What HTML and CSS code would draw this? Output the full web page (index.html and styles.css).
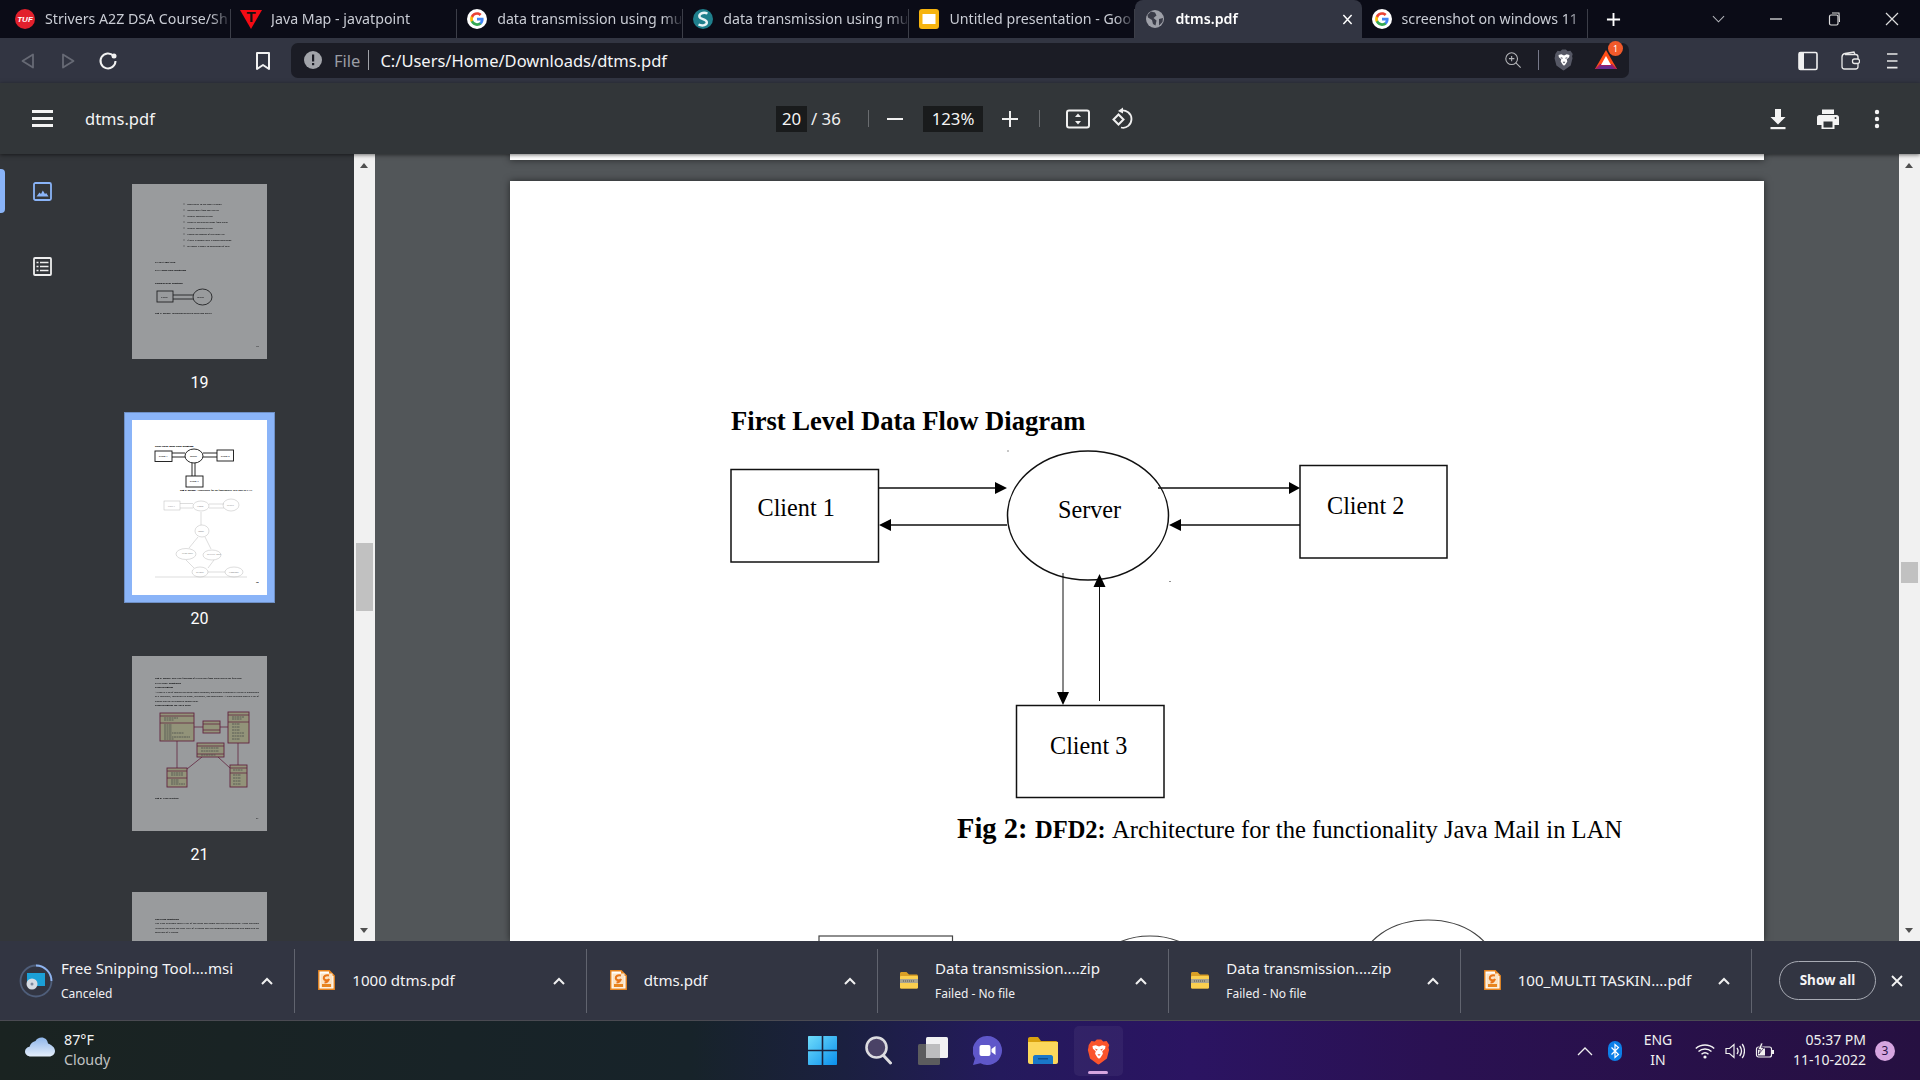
FILE: index.html
```html
<!DOCTYPE html>
<html lang="en">
<head>
<meta charset="utf-8">
<title>dtms.pdf</title>
<link rel="stylesheet" href="styles.css">
</head>
<body>
<svg class="defs" width="0" height="0">
  <defs>
    <symbol id="google" viewBox="0 0 24 24">
      <circle cx="12" cy="12" r="12" fill="#fff"/>
      <g transform="translate(3 3) scale(.75)">
        <path fill="#4285F4" d="M22.56 12.25c0-.78-.07-1.53-.2-2.25H12v4.26h5.92c-.26 1.37-1.04 2.53-2.21 3.31v2.77h3.57c2.08-1.92 3.28-4.74 3.28-8.09z"/>
        <path fill="#34A853" d="M12 23c2.97 0 5.46-.98 7.28-2.66l-3.57-2.77c-.98.66-2.23 1.06-3.71 1.06-2.86 0-5.29-1.93-6.16-4.53H2.18v2.84C3.99 20.53 7.7 23 12 23z"/>
        <path fill="#FBBC05" d="M5.84 14.09c-.22-.66-.35-1.36-.35-2.09s.13-1.43.35-2.09V7.07H2.18C1.43 8.55 1 10.22 1 12s.43 3.45 1.18 4.93l2.85-2.22.81-.62z"/>
        <path fill="#EA4335" d="M12 5.38c1.62 0 3.06.56 4.21 1.64l3.15-3.15C17.45 2.09 14.97 1 12 1 7.7 1 3.99 3.47 2.18 7.07l3.66 2.84c.87-2.6 3.3-4.53 6.16-4.53z"/>
      </g>
    </symbol>
    <symbol id="lion" viewBox="0 0 24 26">
      <path fill="currentColor" d="M2.5 6.5 5 2.8 8 3.4 10 1.5h4l2 1.9 3-.6 2.5 3.7-.7 2.4.5 2.2-2 8-6.8 4.9-1 .5-1-.5-6.8-4.9-2-8 .5-2.2z"/>
      <path fill="#fff" d="M6 7.5 9 6.8 12 8l3-1.2 3 .7-.4 2.5-2.6 2.3.6 2.4L13.5 18 12 19.2 10.500 18l-2.100-3.300.6-2.400-2.600-2.300z"/>
      <path fill="currentColor" d="M8 9.800l2.800.9-1 1.200zM16 9.800l-2.800.9 1 1.200zM10.500 15h3L12 16.800z"/>
    </symbol>
    <symbol id="pdffile" viewBox="0 0 17 20">
      <path fill="#fff" stroke="#e8851f" stroke-width="1.4" d="M.8.8h10.4l5 5v13.400H.8z"/>
      <path fill="#e8851f" d="M11 .8l5.200 5H11z"/>
      <rect x="2.5" y="3.5" width="12" height="14" fill="#fbe3c4"/>
      <path fill="none" stroke="#e8751a" stroke-width="2" d="M11 5.500C7.500 4.500 5.500 6.500 5.800 8.500c.3 2 3.700 2.500 5.200.5-1 3-3 3.500-4.500 3.500"/>
      <rect x="4" y="14" width="9" height="3" fill="#e8851f"/>
    </symbol>
    <symbol id="zip" viewBox="0 0 18 18">
      <path fill="#d99f25" d="M0 2.500C0 1.700.6 1 1.500 1h5L9 3.500h7.500c.8 0 1.500.7 1.500 1.500v11c0 .8-.7 1.500-1.500 1.500h-15C.7 17.500 0 16.800 0 16z"/>
      <rect y="5" width="18" height="12.5" rx="1" fill="#fbcf4f"/>
      <rect x="0" y="8" width="18" height="4" fill="#a9a48f"/>
      <path stroke="#555" stroke-width="1" stroke-dasharray="1 1" d="M3 10h12"/>
    </symbol>
  </defs>
</svg>

<header class="tabbar">
  <div class="tab">
    <svg class="fav" viewBox="0 0 20 20"><circle cx="10" cy="10" r="10" fill="#e2202c"/><text class="tuf" x="10" y="12.8" text-anchor="middle">TUF</text></svg>
    <span class="tab-title">Strivers A2Z DSA Course/Sh</span>
  </div>
  <div class="tab">
    <svg class="fav" viewBox="0 0 20 20"><path fill="#f40b14" d="M-1 1h22L10 20z"/><text class="javat" x="10" y="13" text-anchor="middle">T</text></svg>
    <span class="tab-title">Java Map - javatpoint</span>
  </div>
  <div class="tab">
    <svg class="fav"><use href="#google"/></svg>
    <span class="tab-title">data transmission using mu</span>
  </div>
  <div class="tab">
    <svg class="fav" viewBox="0 0 20 20"><circle cx="10" cy="10" r="10" fill="#1f7f8c"/><path fill="none" stroke="#e8f4f6" stroke-width="2.4" d="M14.500 4.500C10 2.500 5.500 5 6.500 8c.8 2.400 6.800 2 7.300 5 .5 3-4.300 4.500-8.300 2.500"/></svg>
    <span class="tab-title">data transmission using mu</span>
  </div>
  <div class="tab">
    <svg class="fav" viewBox="0 0 20 20"><rect width="20" height="20" x="0" y="0" rx="3" fill="#f6b40e"/><rect x="3.5" y="5" width="13" height="10" fill="#fff"/></svg>
    <span class="tab-title">Untitled presentation - Goo</span>
  </div>
  <div class="tab tab-active">
    <svg class="fav" viewBox="0 0 20 20"><circle cx="10" cy="10" r="9" fill="#9ea0a8"/><path fill="#3a3c48" d="M6 2.500l4 1 1.500 3-3 2.500 3 2.500-1 5-2.500-1.500L7 11 3 8.500 2.500 6zM14 10l4-1-.5 4-3.500 3.500z"/></svg>
    <span class="tab-title">dtms.pdf</span>
    <svg class="tab-x" viewBox="0 0 12 12"><path stroke="#fff" stroke-width="1.6" d="M1.500 1l9 10M10.500 1l-9 10"/></svg>
  </div>
  <div class="tab">
    <svg class="fav"><use href="#google"/></svg>
    <span class="tab-title">screenshot on windows 11</span>
  </div>
  <svg class="newtab" viewBox="0 0 16 16"><path stroke="#fff" stroke-width="2" d="M8 1v14M1 8h14"/></svg>
  <svg class="tabbar-caret" viewBox="0 0 14 8"><path fill="none" stroke="#b4b6bc" stroke-width="1.1" d="M1 1l6 6 6-6"/></svg>
  <svg class="win-btn" viewBox="0 0 14 14"><path stroke="#ddd" stroke-width="1.3" d="M1 7h12"/></svg>
  <svg class="win-btn" viewBox="0 0 14 14"><rect x="2.5" y="3" width="8.5" height="10" rx="1.5" fill="none" stroke="#ddd" stroke-width="1.2"/><path fill="none" stroke="#ddd" stroke-width="1.1" d="M5 1h7l.5 9"/></svg>
  <svg class="win-btn" viewBox="0 0 14 14"><path stroke="#ddd" stroke-width="1.2" d="M1 1l12 12M13 1L1 13"/></svg>
</header>

<nav class="toolbar">
  <svg class="nav-btn" viewBox="0 0 24 24"><path fill="none" stroke="#676a75" stroke-width="1.8" stroke-linejoin="round" d="M6.500 12L17 5.500v13z"/></svg>
  <svg class="nav-btn" viewBox="0 0 24 24"><path fill="none" stroke="#676a75" stroke-width="1.8" stroke-linejoin="round" d="M17.500 12L7 5.500v13z"/></svg>
  <svg class="nav-btn" viewBox="0 0 24 24"><path fill="none" stroke="#f2f2f2" stroke-width="2" d="M17.500 6.800A7.500 7.500 0 1 0 19.500 12"/><circle cx="18" cy="7" r="2.5" fill="#f2f2f2"/></svg>
  <svg class="nav-btn bookmark" viewBox="0 0 24 24"><path fill="none" stroke="#f2f2f2" stroke-width="2" stroke-linejoin="round" d="M6 4h12v16l-6-4-6 4z"/></svg>
  <div class="address">
    <svg class="info" viewBox="0 0 20 20"><circle cx="10" cy="10" r="9" fill="#a2a4aa"/><rect x="9" y="4.5" width="2.2" height="7" fill="#1a1b24"/><rect x="9" y="13" width="2.2" height="2.2" fill="#1a1b24"/></svg>
    <span class="scheme">File</span>
    <span class="addr-sep"></span>
    <span class="url">C:/Users/Home/Downloads/dtms.pdf</span>
    <svg class="addr-zoom" viewBox="0 0 20 20"><circle cx="8.5" cy="8.5" r="6.5" fill="none" stroke="#b5b6ba" stroke-width="1.2"/><path stroke="#b5b6ba" stroke-width="1.2" d="M13 13l5.500 5.500M5.500 8.500h6M8.500 5.500v6"/></svg>
    <span class="addr-sep2"></span>
    <svg class="addr-lion"><use href="#lion"/></svg>
    <div class="bat">
      <svg class="bat-icon" viewBox="0 0 22 19"><path fill="#ff4d17" d="M11 0L0 19h22z"/><path fill="#a01f65" d="M0 19l5-5h12l5 5z"/><path fill="#662d91" d="M3 19l3-3h10l3 3z"/><path fill="#fff" d="M11 6l-5 9h10z"/></svg>
      <span class="bat-badge">1</span>
    </div>
  </div>
  <svg class="tool-btn tool-first" viewBox="0 0 20 20"><rect x="1" y="1.5" width="18" height="17" rx="1.5" fill="none" stroke="#f0f0f0" stroke-width="1.6"/><rect x="1" y="1.5" width="5" height="17" fill="#f0f0f0"/></svg>
  <svg class="tool-btn" viewBox="0 0 20 20"><path fill="none" stroke="#e8e8e8" stroke-width="1.3" d="M2 6c0-2 1-3 3-3.500L14 1l1 2.500M2 6v9.500c0 1.500 1 2.500 2.500 2.500h11c1.500 0 2.500-1 2.500-2.500V6c0-1.500-1-2.500-2.500-2.500H5"/><rect x="12.5" y="8" width="7" height="4.5" rx="2" fill="#323542" stroke="#e8e8e8" stroke-width="1.3"/></svg>
  <svg class="tool-btn" viewBox="0 0 20 20"><path stroke="#e8e8e8" stroke-width="1.7" d="M5 3h10.500M5 10h10.500M5 16.700h10.500"/></svg>
</nav>

<section class="pdfbar">
  <div class="pdf-left">
    <svg class="pdf-menu" viewBox="0 0 21 17"><path stroke="#f4f4f4" stroke-width="3" d="M0 1.500h21M0 8.500h21M0 15.500h21"/></svg>
    <span class="pdf-title">dtms.pdf</span>
  </div>
  <span class="pdf-input page-input">20</span>
  <span class="page-total">/ 36</span>
  <span class="pdf-sep sep-a"></span>
  <svg class="pm minus" viewBox="0 0 20 20"><path stroke="#f0f0f0" stroke-width="2" d="M2 10h16"/></svg>
  <span class="pdf-input zoom-input">123%</span>
  <svg class="pm plus" viewBox="0 0 20 20"><path stroke="#f0f0f0" stroke-width="2" d="M2 10h16M10 2v16"/></svg>
  <span class="pdf-sep sep-b"></span>
  <svg class="pdf-btn fit" viewBox="0 0 24 24"><rect x="1" y="3.5" width="22" height="17" rx="2" fill="none" stroke="#f0f0f0" stroke-width="2"/><path fill="#f0f0f0" d="M12 6.500l3 3.500H9zM12 17.500L9 14h6z"/></svg>
  <svg class="pdf-btn rotate" viewBox="0 0 24 24"><path fill="none" stroke="#f0f0f0" stroke-width="2" d="M8 12.500l5-5 5 5-5 5z" transform="translate(-4.5 0)"/><path fill="none" stroke="#f0f0f0" stroke-width="1.8" d="M11 3.500c5-1 10.500 3 10.500 8.500s-5 10-10.500 8.500"/><path fill="#f0f0f0" d="M8 4l5-3.500v6z"/></svg>
  <svg class="pdf-btn download" viewBox="0 0 24 24"><path fill="#f4f4f4" d="M9 2h6v8h4.500L12 17.500 4.500 10H9z"/><rect x="4.5" y="20" width="15" height="2.2" fill="#f4f4f4"/></svg>
  <svg class="pdf-btn print" viewBox="0 0 24 24"><path fill="#f4f4f4" d="M6 2.500h12v4.500H6zM3.500 8h17C22 8 23 9 23 10.500V18h-4.500v4h-13v-4H1v-7.500C1 9 2 8 3.500 8z"/><rect x="7.5" y="14.5" width="9" height="6" fill="#323639"/><circle cx="19.5" cy="11" r="1" fill="#323639"/></svg>
  <svg class="pdf-btn dots" viewBox="0 0 24 24"><circle cx="12" cy="5" r="2.2" fill="#f4f4f4"/><circle cx="12" cy="12" r="2.2" fill="#f4f4f4"/><circle cx="12" cy="19" r="2.2" fill="#f4f4f4"/></svg>
</section>

<main class="main">
  <aside class="sidebar">
    <div class="rail">
      <span class="rail-mark"></span>
      <svg class="rail-icon" viewBox="0 0 19 19"><rect x="1" y="1" width="17" height="17" rx="1.5" fill="none" stroke="#8ab4f8" stroke-width="1.8"/><path fill="#8ab4f8" d="M3.500 14.500l3-4 1.500 1.500 1.800-3.500 2.200 3.500 1.200-1 2.300 3.500z"/></svg>
      <svg class="rail-icon rail-list" viewBox="0 0 19 19"><rect x="1" y="1" width="17" height="17" rx="1" fill="none" stroke="#eee" stroke-width="1.8"/><path stroke="#eee" stroke-width="1.7" d="M7 5.500h8.500M7 9.500h8.500M7 13.500h8.500M3.500 5.500H5.500M3.500 9.500H5.500M3.500 13.500H5.500"/></svg>
    </div>
    <div class="thumbs">
      <figure class="thumb-item">
        <svg class="thumb dim" viewBox="0 0 135 175">
          <path class="bullets" d="M51.500 20h1M51.500 26h1M51.500 32h1M51.500 38h1M51.500 44h1M51.500 50h1M51.500 56h1M51.500 62h1"/>
          <g class="tt">
            <text x="55" y="21">Open email to see email window</text>
            <text x="55" y="27">Delete email from mail server</text>
            <text x="55" y="33">Display message to user</text>
            <text x="55" y="39">Retrieve the mailing inbox from client</text>
            <text x="55" y="45">Display message to user</text>
            <text x="55" y="51">Update the content of the inbox list</text>
            <text x="55" y="57">If mail is normal mail without description</text>
            <text x="55" y="63">Set inbox window to description of mail</text>
          </g>
          <g class="tb">
            <text x="23" y="79">3.7 DIAGRAMS</text>
            <text x="23" y="87">3.7.1 Data flow Diagrams</text>
            <text x="23" y="100">Context level Diagram</text>
            <text x="23" y="130">Fig 1: DFD1: <tspan class="tn">Interaction between client and Server</tspan></text>
          </g>
          <g class="ts">
            <rect x="25" y="107" width="16" height="11"/>
            <ellipse cx="70.5" cy="113" rx="9.5" ry="8"/>
            <path d="M41 111h20M41 115h20"/>
          </g>
          <g class="tt">
            <text x="29" y="113.5">Client</text>
            <text x="65" y="114">Server</text>
            <text x="124" y="163">19</text>
          </g>
        </svg>
        <figcaption class="thumb-num">19</figcaption>
      </figure>
      <figure class="thumb-item">
        <svg class="thumb selected" viewBox="0 0 135 175">
          <g class="tb"><text x="23" y="27">First Level Data Flow Diagram</text></g>
          <g class="ts">
            <rect x="23" y="31" width="17" height="10.5"/>
            <rect x="85" y="30" width="16.5" height="11"/>
            <rect x="54" y="56" width="17" height="11"/>
            <ellipse cx="62" cy="36" rx="9" ry="7"/>
            <path d="M40 33h13M40 37h13M71 33h14M71 37h14M60 43v13M63 43v13"/>
          </g>
          <g class="tt">
            <text x="27" y="37">Client 1</text>
            <text x="58" y="37">Server</text>
            <text x="89" y="37">Client 2</text>
            <text x="58" y="62">Client 3</text>
          </g>
          <g class="tb"><text x="48" y="71">Fig 2: DFD2: <tspan class="tn">Architecture for the functionality Java Mail in LAN</tspan></text></g>
          <g class="tl">
            <rect x="32" y="81" width="16" height="9"/>
            <ellipse cx="69" cy="86" rx="8" ry="5"/>
            <ellipse cx="99" cy="85" rx="8" ry="6"/>
            <ellipse cx="70" cy="111" rx="7" ry="6"/>
            <ellipse cx="54" cy="134" rx="10" ry="5.5"/>
            <ellipse cx="80" cy="135" rx="9" ry="5"/>
            <ellipse cx="68" cy="152" rx="8" ry="5"/>
            <ellipse cx="102" cy="152" rx="9" ry="5"/>
            <path d="M48 83.500h13M48 88h13M77 84h15M77 88h15M69 92v13M66 117l-9 11M73 117l6 12M54 140l8 8M82 140l-6 8M76 152h17"/>
            <path d="M23 157h92"/>
          </g>
          <g class="tt tt-light">
            <text x="36" y="87">User 1</text>
            <text x="65" y="87">Login</text>
            <text x="95" y="86">Server</text>
            <text x="66" y="112">Inbox</text>
            <text x="50" y="134">Send Mail</text>
            <text x="75" y="135">Receive Mail</text>
            <text x="64" y="153">Reload</text>
            <text x="97" y="153">Compose</text>
          </g>
          <g class="tt"><text x="124" y="163">20</text></g>
        </svg>
        <figcaption class="thumb-num">20</figcaption>
      </figure>
      <figure class="thumb-item">
        <svg class="thumb dim" viewBox="0 0 135 175">
          <g class="tb">
            <text x="23" y="23" textLength="87">Fig 3: DFD3: <tspan class="tn">Step wise functions of a Java Mail from initial step to the final step.</tspan></text>
            <text x="23" y="28">3.7.2 UML Diagrams</text>
            <text x="23" y="32">Class Diagram</text>
            <text x="23" y="50">Class Diagram for Java Mail</text>
            <text x="23" y="143">Fig 4: <tspan class="tn">Class Diagram</tspan></text>
          </g>
          <g class="tt">
            <text x="23" y="37" textLength="104">A class is a set of objects that share same attributes, operations. Graphically a class is represented</text>
            <text x="23" y="41" textLength="104">as a rectangle, including its name, attributes, and operations. A class diagram shows a set of</text>
            <text x="23" y="46">classes and the relationship among them.</text>
            <text x="124" y="163">21</text>
          </g>
          <g class="uml-line">
            <path d="M62 71h9M88 71h8M45 85v27M106 87v22M70 101L55 113M86 101l12 11"/>
          </g>
          <g class="uml">
            <rect x="28" y="57" width="34" height="28"/><path d="M28 60h34M28 67h34"/>
            <rect x="71" y="65" width="17" height="12"/><path d="M71 68h17M71 74h17"/>
            <rect x="96" y="56" width="21" height="31"/><path d="M96 59h21M96 66h21"/>
            <rect x="65" y="87" width="27" height="14"/><path d="M65 90h27M65 98h27"/>
            <rect x="35" y="112" width="20" height="19"/><path d="M35 115h20M35 122h20"/>
            <rect x="98" y="109" width="17" height="22"/><path d="M98 112h17M98 117h17"/>
          </g>
          <path class="uml-meth" d="M32 62h14M32 64h10M32 69h8M32 71h8M32 73h8M32 75h8M32 77h20M32 79h8M32 81h26M32 83h10M100 61h12M100 63h10M100 68h8M100 71h8M100 74h8M100 77h12M100 80h12M100 83h8M69 92h18M69 95h18M69 99h15M39 117h12M39 119h12M39 124h8M39 126h8M39 128h14M101 114h10M101 119h8M101 122h8M101 125h8M101 128h8"/>
        </svg>
        <figcaption class="thumb-num">21</figcaption>
      </figure>
      <figure class="thumb-item">
        <svg class="thumb dim" viewBox="0 0 135 175">
          <g class="tb"><text x="23" y="28">Use Case Diagrams</text></g>
          <g class="tt">
            <text x="23" y="32" textLength="104">Use Case diagrams shows a set of use cases and actors and their relationships. These diagrams</text>
            <text x="23" y="37" textLength="104">illustrate the static use case view of a system and are important in organizing and modeling the</text>
            <text x="23" y="41">behaviors of a system.</text>
          </g>
        </svg>
      </figure>
    </div>
  </aside>
  <div class="scrollbar">
    <span class="sb-up"></span>
    <span class="sb-thumb sb-thumb-left"></span>
    <span class="sb-down"></span>
  </div>
  <div class="viewer">
    <div class="prev-page"></div>
    <div class="page">
      <svg class="diagram" viewBox="0 0 1254 760">
        <text class="dhead" x="221" y="249">First Level Data Flow Diagram</text>
        <g class="dshape">
          <rect x="221" y="288.5" width="147.5" height="92.5"/>
          <rect x="790" y="284.5" width="147" height="92.5"/>
          <rect x="506.5" y="524.5" width="147.5" height="92"/>
          <ellipse cx="578" cy="334.5" rx="80.5" ry="64.5"/>
        </g>
        <g class="dline">
          <path d="M368.500 307h120M497 344H379M648 307h134M790 344H670"/>
          <path class="dthin" d="M553 392v121M589.500 520V406"/>
        </g>
        <g class="dhd">
          <path d="M497 307l-12-6v12zM369 344l12-6v12zM790 307l-11-6v12zM659 344l12-6v12zM553 524l-6-13h12zM589.500 393l-6 13h12z"/>
        </g>
        <path class="ddot" d="M497.500 270h1M659.500 400.500h1"/>
        <g class="dlabel">
          <text x="247.5" y="335">Client 1</text>
          <text x="548" y="336.5">Server</text>
          <text x="817" y="333">Client 2</text>
          <text x="540" y="572.5">Client 3</text>
          <text x="447" y="656.5"><tspan class="dcap-b" x="447">Fig 2:</tspan><tspan class="dcap-s" x="525">DFD2:</tspan><tspan class="dcap" x="602">Architecture for the functionality Java Mail in LAN</tspan></text>
        </g>
        <g class="dlow">
          <rect x="309" y="755" width="133.5" height="40"/>
          <ellipse cx="640" cy="785" rx="50" ry="30"/>
          <ellipse cx="918" cy="785" rx="66" ry="46"/>
        </g>
      </svg>
    </div>
  </div>
  <div class="scrollbar">
    <span class="sb-up"></span>
    <span class="sb-thumb sb-thumb-right"></span>
    <span class="sb-down"></span>
  </div>
</main>

<section class="downloads">
  <div class="dl">
    <svg class="dl-icon" viewBox="0 0 34 34"><circle cx="17" cy="17" r="15.5" fill="none" stroke="#4f5e7a" stroke-width="1.8"/><path fill="none" stroke="#8fb4f0" stroke-width="1.8" d="M17 1.500A15.500 15.500 0 0 1 32.500 17"/><rect x="8" y="9" width="18" height="13" fill="#1ba0d8"/><circle cx="13" cy="20" r="5.5" fill="#d5dbe4"/><circle cx="13" cy="20" r="1.5" fill="#7d8aa0"/></svg>
    <div class="dl-text"><span class="dl-name">Free Snipping Tool....msi</span><span class="dl-sub">Canceled</span></div>
    <svg class="dl-caret" viewBox="0 0 12 8"><path fill="none" stroke="#f0f0f0" stroke-width="2" d="M1 7l5-5 5 5"/></svg>
  </div>
  <div class="dl">
    <svg class="dl-icon"><use href="#pdffile" x="8" y="6" width="17" height="20"/></svg>
    <div class="dl-text"><span class="dl-name">1000 dtms.pdf</span></div>
    <svg class="dl-caret" viewBox="0 0 12 8"><path fill="none" stroke="#f0f0f0" stroke-width="2" d="M1 7l5-5 5 5"/></svg>
  </div>
  <div class="dl">
    <svg class="dl-icon"><use href="#pdffile" x="8" y="6" width="17" height="20"/></svg>
    <div class="dl-text"><span class="dl-name">dtms.pdf</span></div>
    <svg class="dl-caret" viewBox="0 0 12 8"><path fill="none" stroke="#f0f0f0" stroke-width="2" d="M1 7l5-5 5 5"/></svg>
  </div>
  <div class="dl">
    <svg class="dl-icon"><use href="#zip" x="7" y="7" width="18" height="18"/></svg>
    <div class="dl-text"><span class="dl-name">Data transmission....zip</span><span class="dl-sub">Failed - No file</span></div>
    <svg class="dl-caret" viewBox="0 0 12 8"><path fill="none" stroke="#f0f0f0" stroke-width="2" d="M1 7l5-5 5 5"/></svg>
  </div>
  <div class="dl">
    <svg class="dl-icon"><use href="#zip" x="7" y="7" width="18" height="18"/></svg>
    <div class="dl-text"><span class="dl-name">Data transmission....zip</span><span class="dl-sub">Failed - No file</span></div>
    <svg class="dl-caret" viewBox="0 0 12 8"><path fill="none" stroke="#f0f0f0" stroke-width="2" d="M1 7l5-5 5 5"/></svg>
  </div>
  <div class="dl">
    <svg class="dl-icon"><use href="#pdffile" x="8" y="6" width="17" height="20"/></svg>
    <div class="dl-text"><span class="dl-name">100_MULTI TASKIN....pdf</span></div>
    <svg class="dl-caret" viewBox="0 0 12 8"><path fill="none" stroke="#f0f0f0" stroke-width="2" d="M1 7l5-5 5 5"/></svg>
  </div>
  <span class="show-all">Show all</span>
  <svg class="dl-close" viewBox="0 0 12 12"><path stroke="#f4f4f4" stroke-width="1.8" d="M1 1l10 10M11 1L1 11"/></svg>
</section>

<footer class="taskbar">
  <div class="weather">
    <svg class="cloud" viewBox="0 0 30 20">
      <defs><linearGradient id="cloudg" x1="0" y1="0" x2="0" y2="1"><stop offset="0" stop-color="#8fb6ea"/><stop offset="1" stop-color="#e4eefb"/></linearGradient></defs>
      <path fill="url(#cloudg)" d="M6 19.500C2.500 19.500 0 17.300 0 14.500 0 12 1.800 10.200 4.500 9.700 5.500 6.500 8 4.500 10.500 4c1-2.200 3.500-3.500 6-3.500 3.500 0 6 2.300 6.500 6 3.500 1.500 7 3.700 7 7.500 0 3-2.500 5.500-6 5.500z"/>
    </svg>
    <div class="weather-text"><span class="temp">87°F</span><span class="cond">Cloudy</span></div>
  </div>
  <div class="apps">
    <svg class="app win" viewBox="0 0 29 29">
      <defs><linearGradient id="wing" x1="0" y1="0" x2="1" y2="1"><stop offset="0" stop-color="#6fdcfb"/><stop offset="1" stop-color="#0a8fec"/></linearGradient></defs>
      <path fill="url(#wing)" d="M1 0h12.700v13.700H0V1C0 .4.400 0 1 0zM15.300 0H28c.6 0 1 .4 1 1v12.700H15.300zM0 15.300h13.700V29H1c-.6 0-1-.4-1-1zM15.300 15.300H29V28c0 .6-.4 1-1 1H15.300z"/>
    </svg>
    <svg class="app search" viewBox="0 0 27 29"><circle cx="11.5" cy="11.5" r="10" fill="#4a4266" stroke="#dcdce0" stroke-width="2.6"/><path stroke="#dcdce0" stroke-width="3" stroke-linecap="round" d="M18.500 19.500l7 7.500"/></svg>
    <svg class="app tview" viewBox="0 0 30 28"><rect y="7" width="22" height="21" rx="1.5" fill="#5c5c5e"/><rect x="8" width="22" height="21" rx="1.5" fill="#f1f1f3"/><rect x="8" y="7" width="14" height="14" fill="#bdbdbf"/></svg>
    <svg class="app chat" viewBox="0 0 29 29"><path fill="#5f57c9" d="M14.500 0a14.500 14.500 0 1 1-7 27.200L0 29l2-6.700A14.500 14.500 0 0 1 14.500 0z"/><rect x="6.5" y="9" width="11" height="11" rx="2" fill="#fff"/><path fill="#fff" d="M18.500 13l4-3v9l-4-3z"/></svg>
    <svg class="app folder" viewBox="0 0 30 27"><path fill="#d9a20f" d="M0 2C0 .9.900 0 2 0h8l3 4h15c1 0 2 1 2 2v6H0z"/><path fill="#fcd85c" d="M0 5h30v20c0 1-1 2-2 2H2c-1 0-2-1-2-2z"/><path fill="#1a78c8" d="M5 20c0-1 1-2 2-2h16c1 0 2 1 2 2v7H5z"/><rect x="10" y="21" width="10" height="1.5" fill="#0d4f90"/></svg>
    <div class="brave-slot">
      <svg class="brave-lion"><use href="#lion"/></svg>
      <span class="brave-line"></span>
    </div>
  </div>
  <div class="tray">
    <svg class="tray-caret" viewBox="0 0 16 10"><path fill="none" stroke="#f0f0f0" stroke-width="1.3" d="M1 9l7-7 7 7"/></svg>
    <svg class="bt" viewBox="0 0 14 20"><rect width="14" height="20" rx="7" fill="#0d7fe8"/><path fill="none" stroke="#fff" stroke-width="1.2" d="M3.500 6.500l7 7L7 16.500v-13l3.500 3-7 7"/></svg>
    <div class="lang"><span>ENG</span><span>IN</span></div>
    <svg class="wifi" viewBox="0 0 20 16"><g fill="none" stroke="#f4f4f4" stroke-width="1.5"><path d="M.8 5.500C6 .8 14 .8 19.200 5.500"/><path d="M3.500 8.500c3.600-3.200 9.400-3.200 13 0"/><path d="M6.500 11.300c2-1.700 5-1.700 7 0"/></g><circle cx="10" cy="14" r="1.6" fill="#f4f4f4"/></svg>
    <svg class="vol" viewBox="0 0 20 16"><path fill="none" stroke="#f0f0f0" stroke-width="1.2" d="M1 5.500h3.500L9 1.500v13l-4.500-4H1z"/><path fill="none" stroke="#f0f0f0" stroke-width="1.3" d="M12 5c1.300 1.800 1.300 4.200 0 6M14.700 3c2.200 3 2.200 7 0 10M17.200 1c3 4 3 10 0 14"/></svg>
    <svg class="batt" viewBox="0 0 20 16"><rect x="1.5" y="4" width="15" height="10" rx="2" fill="none" stroke="#f0f0f0" stroke-width="1.2"/><path fill="#f0f0f0" d="M3 5.500h7v7H3zM17 7h2v4h-2z"/><path fill="#f0f0f0" stroke="#2a1245" stroke-width=".7" d="M6 0L3 6.500h2.500L4 11l5-6.500H6.500L8 0z"/></svg>
    <div class="clock"><span>05:37 PM</span><span>11-10-2022</span></div>
    <span class="notif">3</span>
  </div>
</footer>
</body>
</html>
```

FILE: styles.css
```css
* { box-sizing: border-box; }
html, body { margin: 0; padding: 0; }
body {
  width: 1920px;
  height: 1080px;
  overflow: hidden;
  display: flex;
  flex-direction: column;
  background: #323639;
  font-family: "Noto Sans", "Open Sans", sans-serif;
  color: #fff;
}
svg { display: block; flex: none; }
.defs { position: absolute; }

/* tab strip */
.tabbar {
  flex: 0 0 38px;
  display: flex;
  align-items: center;
  padding-left: 5px;
  background: #0b0c17;
}
.tab {
  flex: 0 0 226.1px;
  min-width: 0;
  height: 38px;
  display: flex;
  align-items: center;
  padding-left: 10px;
  padding-right: 2px;
  position: relative;
}
.tab::after {
  content: "";
  position: absolute;
  right: 0;
  top: 9px;
  bottom: 0;
  width: 1px;
  background: #3c3e48;
}
.tab-active {
  background: #323542;
  border-radius: 8px 8px 0 0;
  padding-right: 9px;
}
.tab-active::after { display: none; }
.fav { width: 20px; height: 20px; margin-right: 10px; overflow: visible; }
.tab-title {
  flex: 1;
  min-width: 0;
  padding-bottom: 2px;
  white-space: nowrap;
  font-size: 14.2px;
  color: #c9ccd4;
  -webkit-mask-image: linear-gradient(90deg, #000 90%, rgba(0, 0, 0, .15));
  mask-image: linear-gradient(90deg, #000 90%, rgba(0, 0, 0, .15));
}
.tab-active .tab-title { color: #fff; font-weight: 600; }
.tab-x { width: 11px; height: 11px; }
.tuf { font: italic 800 8px "Liberation Sans", sans-serif; fill: #fff; }
.javat { font: 700 15px "Liberation Sans", sans-serif; fill: #111; }
.newtab { width: 15px; height: 15px; margin-left: 18.8px; }
.tabbar-caret { width: 13px; height: 8px; margin-left: 91px; }
.win-btn { width: 14px; height: 14px; margin-left: 44px; }

/* address toolbar */
.toolbar {
  flex: 0 0 45px;
  display: flex;
  align-items: center;
  padding-left: 8px;
  background: #323542;
}
.nav-btn { width: 40px; height: 24px; }
.bookmark { margin-left: 115px; }
.address {
  flex: 0 0 1338px;
  margin-left: 8px;
  height: 35px;
  margin-top: -1px;
  display: flex;
  align-items: center;
  padding-left: 12px;
  padding-right: 9px;
  border-radius: 7px;
  background: #1b1c25;
}
.info { width: 20px; height: 20px; }
.scheme { margin-left: 11px; font-size: 16.5px; color: #9a9ca4; }
.addr-sep { width: 1px; height: 20px; margin-left: 8px; background: #a0a2a8; }
.url { margin-left: 11px; font-size: 16.5px; color: #f4f4f6; white-space: nowrap; }
.addr-zoom { width: 18px; height: 18px; margin-left: auto; }
.addr-sep2 { width: 1px; height: 20px; margin-left: 16px; background: #77798a; }
.addr-lion { width: 22px; height: 24px; margin-left: 14px; color: #565865; }
.bat { position: relative; width: 28px; height: 20px; margin-left: 17px; }
.bat-icon { width: 22px; height: 19px; margin-left: 3px; }
.bat-badge {
  position: absolute;
  left: 16px;
  top: -9px;
  width: 15px;
  height: 15px;
  border-radius: 50%;
  background: #f1592a;
  color: #fff;
  font-size: 9px;
  line-height: 15px;
  text-align: center;
}
.tool-btn { width: 20px; height: 20px; margin-left: 22px; }
.tool-first { margin-left: 169px; }

/* pdf toolbar */
.pdfbar {
  flex: 0 0 71px;
  display: flex;
  align-items: center;
  background: #323639;
  position: relative;
  z-index: 3;
  box-shadow: 0 1px 4px rgba(0, 0, 0, .55);
}
.pdf-left { flex: 0 0 776px; display: flex; align-items: center; padding-left: 32px; }
.pdf-menu { width: 21px; height: 17px; }
.pdf-title { margin-left: 32px; font-size: 16.5px; color: #f4f4f4; }
.pdf-input {
  height: 26px;
  background: #191b1c;
  font-size: 16.8px;
  line-height: 26px;
  text-align: center;
  color: #f4f4f4;
}
.page-input { width: 31px; }
.page-total { width: 32px; margin-left: 4px; font-size: 16.8px; color: #f0f0f0; white-space: nowrap; }
.pdf-sep { width: 1px; height: 17px; background: #6a6d70; }
.sep-a { margin-left: 25px; }
.pm { width: 20px; height: 20px; }
.minus { margin-left: 16px; }
.zoom-input { width: 60px; margin-left: 18px; }
.plus { margin-left: 17px; }
.sep-b { margin-left: 19px; }
.pdf-btn { width: 24px; height: 24px; }
.fit { margin-left: 26px; }
.rotate { margin-left: 20px; }
.download { margin-left: 632px; }
.print { margin-left: 26px; }
.dots { margin-left: 25px; }

/* workspace */
.main { flex: 1; min-height: 0; display: flex; overflow: hidden; }
.sidebar { flex: 0 0 354px; display: flex; background: #33363a; overflow: hidden; }
.rail {
  flex: 0 0 85px;
  position: relative;
  display: flex;
  flex-direction: column;
  align-items: center;
  padding-top: 28px;
}
.rail-mark {
  position: absolute;
  left: 0;
  top: 15px;
  width: 5px;
  height: 44px;
  border-radius: 0 4px 4px 0;
  background: #8ab4f8;
}
.rail-icon { width: 19px; height: 19px; }
.rail-list { margin-top: 56px; }
.thumbs { flex: 0 0 229px; display: flex; flex-direction: column; align-items: center; padding-top: 30px; }
.thumb-item { margin: 0; flex: none; display: flex; flex-direction: column; align-items: center; height: 236px; }
.thumb { width: 135px; height: 175px; background: #fff; }
.dim { opacity: .5; }
.selected { outline: 7px solid #8ab4f8; box-shadow: 0 0 0 8px #6e8fc4; }
.thumb-num { font: 400 16px/20px Roboto, sans-serif; color: #fff; margin-top: 14px; }

.bullets { stroke: #111; stroke-width: .8; fill: none; }
.tt text { font: 2.66px "Liberation Serif", serif; fill: #000; stroke: #000; stroke-width: .05; }
.tt-light text { fill: #777; stroke: none; }
.tb text { font: 700 2.9px "Liberation Serif", serif; fill: #000; stroke: #000; stroke-width: .08; }
.tb .tn { font-weight: 400; font-size: 2.66px; }
.ts rect, .ts ellipse, .ts path { fill: none; stroke: #111; stroke-width: .9; }
.tl rect, .tl ellipse, .tl path { fill: none; stroke: #b4b4b4; stroke-width: .45; }
.uml rect { fill: #f0f0b8; stroke: #8e1144; stroke-width: .9; }
.uml path { stroke: #8e1144; stroke-width: .8; fill: none; }
.uml-line path { stroke: #8e1144; stroke-width: .8; fill: none; }
.uml-meth { stroke: #555; stroke-width: .7; stroke-dasharray: 2 .5; fill: none; }

/* scrollbars */
.scrollbar { flex: 0 0 21px; position: relative; background: #f1f1f1; }
.sb-up, .sb-down {
  position: absolute;
  left: 6px;
  width: 0;
  height: 0;
  border-left: 4.5px solid transparent;
  border-right: 4.5px solid transparent;
}
.sb-up { top: 9px; border-bottom: 5px solid #505050; }
.sb-down { bottom: 8px; border-top: 5px solid #505050; }
.sb-thumb { position: absolute; left: 2px; width: 17px; background: #c1c1c1; }
.sb-thumb-left { top: 389px; height: 68px; }
.sb-thumb-right { top: 408px; height: 21px; }

/* document */
.viewer {
  flex: 1;
  min-width: 0;
  display: flex;
  flex-direction: column;
  align-items: center;
  background: #525659;
  overflow: hidden;
}
.prev-page { flex: 0 0 6px; width: 1254px; background: #fff; box-shadow: 0 0 7px rgba(0, 0, 0, .55); }
.page { flex: 0 0 760px; width: 1254px; margin-top: 21px; background: #fff; box-shadow: 0 0 7px rgba(0, 0, 0, .55); overflow: hidden; }
.diagram { width: 1254px; height: 760px; overflow: visible; }
.dhead { font: 700 26.6px "Liberation Serif", serif; fill: #000; }
.dshape rect, .dshape ellipse { fill: none; stroke: #111; stroke-width: 1.5; }
.dline path { stroke: #111; stroke-width: 1.5; fill: none; }
.dline .dthin { stroke-width: 1; }
.dhd path { fill: #000; }
.ddot { stroke: #222; stroke-width: 1; }
.dlabel text { font: 24.2px "Liberation Serif", serif; fill: #000; }
.dcap { font-size: 24.6px; }
.dcap-b { font-weight: 700; font-size: 28.5px; }
.dcap-s { font-weight: 700; font-size: 24.5px; }
.dlow rect, .dlow ellipse { fill: none; stroke: #444; stroke-width: 1.2; }

/* download shelf */
.downloads {
  flex: 0 0 79px;
  display: flex;
  align-items: center;
  padding-left: 4px;
  background: #323542;
  position: relative;
  z-index: 2;
}
.dl {
  flex: 0 0 291.33px;
  min-width: 0;
  height: 64px;
  display: flex;
  align-items: center;
  padding-left: 15px;
  padding-right: 21px;
  border-right: 1px solid #61646f;
}
.dl-icon { width: 34px; height: 34px; margin-right: 8px; }
.dl-text { flex: 1; min-width: 0; padding-bottom: 2px; display: flex; flex-direction: column; gap: 8px; }
.dl-name { font-size: 15.1px; line-height: 20px; color: #f4f4f6; white-space: nowrap; }
.dl-sub { font-size: 12px; line-height: 16px; color: #f0f0f2; white-space: nowrap; }
.dl-caret { width: 12px; height: 8px; }
.show-all {
  flex: 0 0 97px;
  height: 39px;
  margin-left: 27px;
  border: 1px solid #a8abb4;
  border-radius: 20px;
  font-size: 13.5px;
  font-weight: 700;
  line-height: 37px;
  text-align: center;
  color: #f4f4f6;
}
.dl-close { width: 12px; height: 12px; margin-left: 15px; }

/* windows taskbar */
.taskbar {
  flex: 0 0 60px;
  display: flex;
  align-items: center;
  border-top: 1px solid #4a4a52;
  background: linear-gradient(90deg, #1a2321 0, #17232a 36%, #1b2040 44%, #241a5c 52%, #2b1462 62%, #2a1152 75%, #261041 100%);
}
.weather { flex: 0 0 808px; display: flex; align-items: center; padding-left: 25px; }
.cloud { width: 30px; height: 20px; margin-bottom: 7px; }
.weather-text { margin-left: 9px; padding-bottom: 2px; display: flex; flex-direction: column; font-size: 14.3px; line-height: 20px; }
.temp { color: #f4f4f4; }
.cond { color: #c0c2c2; }
.apps { flex: 0 0 315px; display: flex; align-items: center; }
.app { flex: none; }
.win { width: 29px; height: 29px; }
.search { width: 27px; height: 29px; margin-left: 28px; }
.tview { width: 30px; height: 28px; margin-left: 26px; }
.chat { width: 29px; height: 29px; margin-left: 25px; }
.folder { width: 30px; height: 27px; margin-left: 26px; }
.brave-slot {
  width: 49px;
  height: 50px;
  margin-left: 16px;
  display: flex;
  flex-direction: column;
  align-items: center;
  padding-top: 11px;
  border-radius: 5px;
  background: rgba(255, 255, 255, .05);
  position: relative;
}
.brave-lion { width: 26px; height: 30px; color: #fb542b; }
.brave-line { position: absolute; left: 14px; bottom: 2px; width: 20px; height: 3px; border-radius: 2px; background: #d6a5e0; }
.tray { flex: 1; display: flex; align-items: center; padding-left: 454px; }
.tray-caret { width: 16px; height: 10px; }
.bt { width: 14px; height: 20px; margin-left: 15px; }
.lang {
  width: 32px;
  margin-left: 20px;
  padding-bottom: 2px;
  display: flex;
  flex-direction: column;
  align-items: center;
  font-size: 14px;
  line-height: 20px;
  color: #f0f0f0;
}
.wifi { width: 20px; height: 16px; margin-left: 21px; }
.vol { width: 20px; height: 16px; margin-left: 10px; }
.batt { width: 20px; height: 16px; margin-left: 10px; }
.clock {
  width: 91px;
  padding-bottom: 2px;
  display: flex;
  flex-direction: column;
  align-items: flex-end;
  font-size: 14px;
  line-height: 20px;
  color: #f0f0f0;
}
.notif {
  flex: none;
  width: 20px;
  height: 20px;
  margin-left: 9px;
  border-radius: 50%;
  background: #d6a5e0;
  color: #2a1245;
  font-size: 12px;
  line-height: 20px;
  text-align: center;
}
```
